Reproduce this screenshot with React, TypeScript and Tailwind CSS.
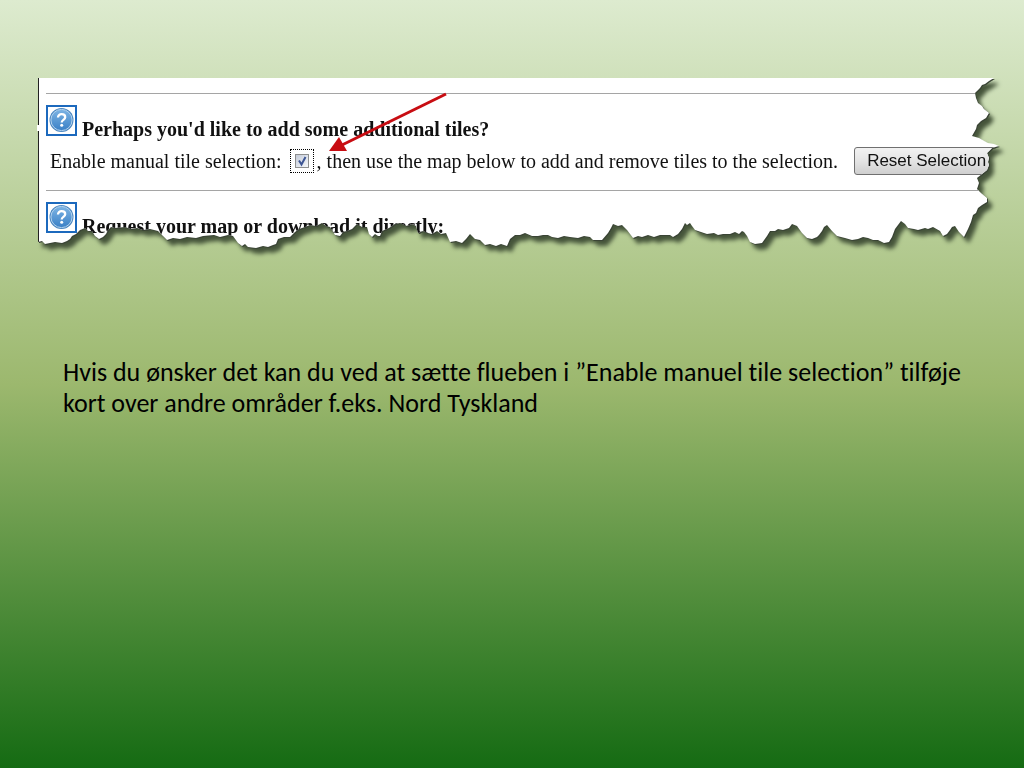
import * as React from 'react';

// Outline of the torn sheet, drawn on a 962 x 172 grid and scaled to the panel.
const TORN_EDGE = [
    '0,0 956,0 951,3 947,6 944,7 942,10 939,13 937,15 938,20 940,25 944,28 946,31 951,35 948,40 943,43 939,47 938,51 934,58',
    '941,60 950,65 956,66 961,68 954,70 949,75 951,80 950,84 951,87 949,92 944,96 939,100 941,105 939,111 943,115',
    '949,120 949,124 944,127 940,130 938,135 935,137 933,144 930,151 926,159 921,154 917,148 914,149 912,152 909,156',
    '905,158 902,153 895,149 890,151 887,150 880,152 876,151 870,150 867,146 863,143 860,147 857,151 854,159 851,164',
    '846,165 840,162 835,162 830,160 825,159 820,161 814,162 807,160 799,158 794,153 789,147 786,149 784,153 781,157',
    '779,159 774,161 769,160 764,155 759,148 754,146 751,150 745,152 740,151 737,153 732,153 729,158 724,165 717,166',
    '712,164 709,158 706,154 704,153 701,156 697,154 692,156 685,156 680,157 676,155 669,156 663,154 657,152 654,148',
    '652,145 649,147 647,145 644,151 640,156 635,159 632,157 622,157 616,159 610,157 604,159 600,158 595,160 589,152',
    '584,147 580,148 575,146 573,150 570,155 564,162 555,162 552,159 546,158 540,160 532,159 526,158 520,160 514,159',
    '510,157 505,157 500,158 494,158 487,155 482,157 477,157 472,161 469,168 463,166 458,168 452,166 447,167 442,162',
    '437,161 432,156 428,161 424,165 418,163 412,164 408,155 403,156 399,153 394,156 390,155 385,153 380,155 378,148',
    '374,146 369,148 362,145 357,146 351,150 344,153 342,158 340,158 337,156 334,159 331,156 329,149 324,149 319,146',
    '314,151 309,153 305,154 302,158 297,157 292,149 288,148 284,145 278,148 272,147 267,149 261,151 257,154 252,159',
    '246,159 240,161 238,166 235,167 230,169 225,168 218,170 210,169 207,166 204,168 200,165 195,158 190,157 182,159',
    '176,157 165,158 158,160 149,159 142,161 135,160 129,162 125,158 120,153 112,151 105,152 99,150 93,151 87,149',
    '77,150 73,149 70,152 68,156 65,159 61,161 57,158 54,153 50,153 47,150 42,152 38,156 34,158 32,161 29,163 24,165',
    '17,164 12,165 7,166 4,163 0,164',
].join(' ');

function HelpIcon() {
    return (
        <a
            href="#help"
            aria-label="Help"
            className="block size-[31px] shrink-0 border-2 border-[#1c69bd] bg-white"
        >
            <svg viewBox="0 0 27 27" className="size-full" aria-hidden="true">
                <defs>
                    <linearGradient id="ball" x1="0" y1="0" x2="0" y2="1">
                        <stop offset="0" stopColor="#7db4e4" />
                        <stop offset="1" stopColor="#3a80c6" />
                    </linearGradient>
                </defs>
                <circle cx="13.5" cy="13" r="12" fill="#4a86c0" />
                <circle cx="13.5" cy="13" r="10.6" fill="url(#ball)" stroke="#b4d3ee" strokeWidth="1" />
                <path
                    d="M10 10.6c0-2.2 1.5-3.4 3.6-3.4s3.6 1.2 3.6 3c0 2.7-3.5 2.6-3.5 5.2"
                    fill="none"
                    stroke="#fff"
                    strokeWidth="2.3"
                />
                <circle cx="13.7" cy="18.2" r="1.5" fill="#fff" />
            </svg>
        </a>
    );
}

function SectionTitle({children}: {children: React.ReactNode}) {
    return (
        <div className="flex items-start gap-[5px]">
            <HelpIcon />
            <h2 className="pt-3 text-[20px] leading-6 font-bold">{children}</h2>
        </div>
    );
}

function TileSelection() {
    const [enabled, setEnabled] = React.useState<boolean>(true);

    return (
        <div className="mt-[6px] flex h-7 items-center pl-1 text-[20px] leading-7">
            <label htmlFor="manual-tiles">Enable manual tile selection:</label>
            <span className="relative ml-2 flex size-6 shrink-0 items-center justify-center border border-dotted border-black">
                <input
                    id="manual-tiles"
                    type="checkbox"
                    checked={enabled}
                    onChange={(e) => setEnabled(e.target.checked)}
                    className="size-[14px] appearance-none border border-[#8e8f8f] bg-linear-to-br from-[#c4cbd8] to-[#f6f8fb]"
                />
                {enabled && (
                    <svg viewBox="0 0 14 14" className="pointer-events-none absolute size-[14px]" aria-hidden="true">
                        <path d="M4 6.5l2.5 4L10.5 3" fill="none" stroke="#3d5594" strokeWidth="2" />
                    </svg>
                )}
            </span>
            <span className="ml-[3px]">, then use the map below to add and remove tiles to the selection.</span>
            <button
                type="button"
                className="ml-4 h-7 shrink-0 rounded-[3px] border border-[#707070] bg-linear-to-b from-[#f2f2f2] via-[#e4e4e4] to-[#cfcfcf] px-3 font-['Liberation_Sans',sans-serif] text-[17px] leading-6"
            >
                Reset Selection
            </button>
        </div>
    );
}

function TornPanel() {
    return (
        <section className="relative drop-shadow-[4px_5px_2px_#45543a]">
            <svg className="absolute size-0" aria-hidden="true">
                <clipPath id="torn" clipPathUnits="objectBoundingBox">
                    <polygon points={TORN_EDGE} transform={`scale(${1 / 962} ${1 / 172})`} />
                </clipPath>
            </svg>
            <div className="drop-shadow-[1px_1px_0px_#3a4435]">
                <div className="h-[172px] overflow-hidden border-l border-[#222] bg-white pl-[7px] font-['Liberation_Serif',serif] whitespace-nowrap text-[#111] [clip-path:url(#torn)]">
                    <hr className="mt-[15px] mb-[11px] border-t border-[#a5a5a5]" />
                    <SectionTitle>Perhaps you'd like to add some additional tiles?</SectionTitle>
                    <TileSelection />
                    <hr className="mt-[15px] mb-[11px] border-t border-[#a5a5a5]" />
                    <SectionTitle>Request your map or download it directly:</SectionTitle>
                </div>
            </div>
            <span className="absolute top-[47px] -left-px h-[6px] w-[2px] bg-white" />
            <svg
                viewBox="0 0 120 62"
                className="pointer-events-none absolute top-[14px] left-[290px] h-[62px] w-[120px]"
                aria-hidden="true"
            >
                <path d="M118 2L14 53" stroke="#c80d12" strokeWidth="3" />
                <path d="M1 59L11 45l8 14z" fill="#c80d12" />
            </svg>
        </section>
    );
}

export default function App() {
    return (
        <main className="min-h-screen bg-linear-to-b from-[#ddebcf] via-[#9cb86e] to-[#156b13] [--tw-gradient-position:to_bottom_in_srgb] pt-[78px] pr-6 pl-[38px]">
            <TornPanel />
            <p className="mt-[107px] pr-6 pl-[25px] font-['Carlito','Lato',sans-serif] text-[26px] leading-[31px] text-black [font-variant-ligatures:none]">
                Hvis du ønsker det kan du ved at sætte flueben i ”Enable manuel tile selection” tilføje kort over andre
                områder f.eks. Nord Tyskland
            </p>
        </main>
    );
}
